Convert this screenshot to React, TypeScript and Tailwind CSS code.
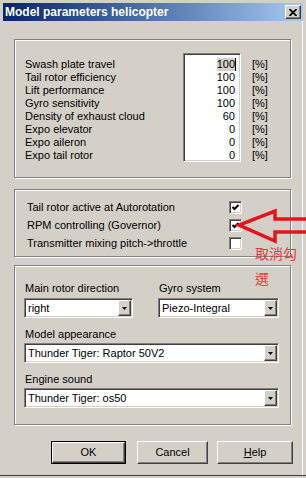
import type { ReactElement } from "react";

// --- Bevel styles (Windows classic) ---

const raised =
  "border border-t-white border-l-white border-r-[#404040] border-b-[#404040] shadow-[inset_-1px_-1px_0_#808080]";
const sunken =
  "border border-t-[#808080] border-l-[#808080] border-r-white border-b-white shadow-[inset_1px_1px_0_#404040,inset_-1px_-1px_0_#d4d0c8]";
const etched = "border border-[#808080] shadow-[inset_1px_1px_0_#fff,1px_1px_0_#fff]";

const PARAMS = [
  { label: "Swash plate travel", value: "100" },
  { label: "Tail rotor efficiency", value: "100" },
  { label: "Lift performance", value: "100" },
  { label: "Gyro sensitivity", value: "100" },
  { label: "Density of exhaust cloud", value: "60" },
  { label: "Expo elevator", value: "0" },
  { label: "Expo aileron", value: "0" },
  { label: "Expo tail rotor", value: "0" },
];

const OPTIONS = [
  { label: "Tail rotor active at Autorotation", checked: true },
  { label: "RPM controlling (Governor)", checked: true },
  { label: "Transmitter mixing pitch->throttle", checked: false },
];

// --- Small controls ---

function CheckBox({ checked }: { checked: boolean }): ReactElement {
  return (
    <div className={`${sunken} flex h-[13px] w-[13px] items-center justify-center bg-white`}>
      {checked && (
        <svg width="9" height="9" viewBox="0 0 9 9">
          <path d="M1.5 4 L3.5 6 L7.5 2" fill="none" stroke="#000" strokeWidth="2" />
        </svg>
      )}
    </div>
  );
}

function Combo({ value, className }: { value: string; className: string }): ReactElement {
  return (
    <div className={`${sunken} flex h-[20px] bg-white p-[1px] ${className}`}>
      <span className="flex-1 pl-[2px] leading-[16px]">{value}</span>
      <div className={`${raised} flex h-[16px] w-[13px] items-center justify-center bg-[#d4d0c8]`}>
        <svg width="5" height="3" viewBox="0 0 5 3">
          <path d="M0 0 H5 L2.5 3 Z" fill="#000" />
        </svg>
      </div>
    </div>
  );
}

function Button({
  children,
  width,
  isDefault,
}: {
  children: React.ReactNode;
  width: string;
  isDefault?: boolean;
}): ReactElement {
  if (isDefault) {
    return (
      <div className={`h-[23px] border border-black ${width}`}>
        <div className={`${raised} flex h-full items-center justify-center`}>{children}</div>
      </div>
    );
  }
  return (
    <div className={`${raised} flex h-[23px] items-center justify-center ${width}`}>
      {children}
    </div>
  );
}

// --- Main ---

export default function App(): ReactElement {
  return (
    <div className="relative h-[478px] w-[306px] overflow-hidden bg-[#d4d0c8] pt-[3px] pl-[3px] font-['Liberation_Sans',Arial,sans-serif] text-[11px] leading-[13px] text-black">
      {/* Title bar */}
      <div className="flex h-[18px] w-[300px] items-center bg-gradient-to-r from-[#0a246a] to-[#a6caf0] pl-[2px] pr-[2px]">
        <span className="text-[12px] font-bold text-white">Model parameters helicopter</span>
        <div className={`${raised} ml-auto flex h-[14px] w-[16px] items-center justify-center bg-[#d4d0c8]`}>
          <svg width="8" height="7" viewBox="0 0 8 7">
            <path d="M0.5 0 L7.5 7 M7.5 0 L0.5 7" stroke="#000" strokeWidth="1.8" />
          </svg>
        </div>
      </div>

      {/* Parameters */}
      <div className={`${etched} mt-[18px] ml-[11px] h-[139px] w-[277px]`}>
        <div className="flex pl-[10px] pt-[13px]">
          <div className="w-[158px] pt-[5px]">
            {PARAMS.map((p) => (
              <div key={p.label}>{p.label}</div>
            ))}
          </div>
          <div className={`${sunken} h-[109px] w-[58px] overflow-hidden bg-white px-[1px] pt-[4px]`}>
            {PARAMS.map((p, i) => (
              <div key={p.label} className="flex justify-end pr-[4px]">
                {i === 0 ? (
                  <>
                    <span className="bg-[#d4d0c8]">{p.value}</span>
                    <span className="mr-[-1px] h-[13px] w-px bg-black" />
                  </>
                ) : (
                  <span>{p.value}</span>
                )}
              </div>
            ))}
          </div>
          <div className="ml-[11px] pt-[5px]">
            {PARAMS.map((p) => (
              <div key={p.label}>[%]</div>
            ))}
          </div>
        </div>
      </div>

      {/* Options */}
      <div className={`${etched} mt-[11px] ml-[11px] h-[68px] w-[277px] pt-[8px] pl-[12px]`}>
        {OPTIONS.map((o) => (
          <div key={o.label} className="flex h-[18px] items-center">
            <span className="w-[202px]">{o.label}</span>
            <CheckBox checked={o.checked} />
          </div>
        ))}
      </div>

      {/* Model settings */}
      <div className={`${etched} mt-[8px] ml-[11px] h-[160px] w-[277px] pt-[16px] pl-[9px]`}>
        <div className="flex">
          <div className="w-[109px]">
            <div className="pl-[1px]">Main rotor direction</div>
            <Combo value="right" className="mt-[3px] w-[109px]" />
          </div>
          <div className="ml-[25px] w-[121px]">
            <div className="pl-[1px]">Gyro system</div>
            <Combo value="Piezo-Integral" className="mt-[3px] w-[121px]" />
          </div>
        </div>
        <div className="mt-[10px] pl-[1px]">Model appearance</div>
        <Combo value="Thunder Tiger: Raptor 50V2" className="mt-[2px] w-[255px]" />
        <div className="mt-[10px] pl-[1px]">Engine sound</div>
        <Combo value="Thunder Tiger: os50" className="mt-[2px] w-[255px]" />
      </div>

      {/* Buttons */}
      <div className="mt-[16px] flex pl-[48px]">
        <Button width="w-[75px]" isDefault>
          OK
        </Button>
        <div className="ml-[11px]">
          <Button width="w-[71px]">Cancel</Button>
        </div>
        <div className="ml-[9px]">
          <Button width="w-[76px]">
            <span>
              <span className="underline">H</span>elp
            </span>
          </Button>
        </div>
      </div>

      {/* Window frame, right & bottom */}
      <div className="absolute top-[21px] right-[3px] h-[454px] w-px bg-white" />
      <div className="absolute bottom-[2px] left-0 h-px w-full bg-[#404040]" />

      {/* Red annotation arrow */}
      <svg className="absolute left-[234px] top-[205px]" width="72" height="42" viewBox="0 0 72 42">
        <path
          d="M72 14 H41 V6 L5 20 L41 36 V27 H72"
          fill="none"
          stroke="#e3141c"
          strokeWidth="3.5"
          strokeLinejoin="miter"
        />
      </svg>
      <div className="absolute left-[255px] top-[241px] w-[44px] font-['Noto_Sans_CJK_TC',sans-serif] text-[14px] leading-[25px] text-[#e8383c]">
        取消勾
        <br />選
      </div>
    </div>
  );
}
